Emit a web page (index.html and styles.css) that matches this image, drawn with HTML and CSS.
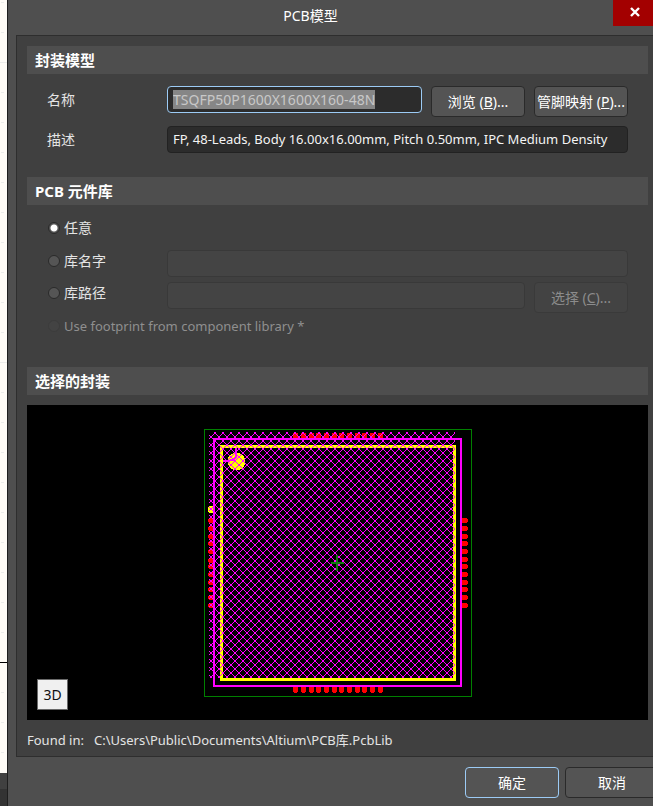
FILE: index.html
```
<!DOCTYPE html>
<html lang="zh-CN">
<head>
<meta charset="utf-8">
<meta name="viewport" content="width=device-width, initial-scale=1">
<title>PCB模型</title>
<link rel="stylesheet" href="styles.css">
</head>
<body>
<div class="sheet" aria-hidden="true"></div>
<main class="dialog">
  <header class="titlebar">
    <h1 class="title">PCB模型</h1>
    <button class="close" type="button" aria-label="关闭">
      <svg width="12" height="12" viewBox="0 0 12 12"><path d="M2 2L10 10M10 2L2 10" stroke="#fff" stroke-width="2.4" fill="none"/></svg>
    </button>
  </header>

  <div class="panel">
    <section>
      <h2 class="heading">封装模型</h2>
      <div class="fields">
        <div class="row">
          <label class="label" for="name">名称</label>
          <input class="input active" id="name" type="text" value="TSQFP50P1600X1600X160-48N" spellcheck="false">
          <button class="button" type="button">浏览 (<u>B</u>)...</button>
          <button class="button" type="button">管脚映射 (<u>P</u>)...</button>
        </div>
        <div class="row">
          <label class="label" for="desc">描述</label>
          <input class="input" id="desc" type="text" value="FP, 48-Leads, Body 16.00x16.00mm, Pitch 0.50mm, IPC Medium Density" spellcheck="false">
        </div>
      </div>
    </section>

    <section>
      <h2 class="heading">PCB 元件库</h2>
      <div class="options">
        <div class="option">
          <label class="choice"><input class="radio" type="radio" name="lib" checked>任意</label>
        </div>
        <div class="option">
          <label class="choice"><input class="radio" type="radio" name="lib">库名字</label>
          <input class="input" type="text" aria-label="库名字" disabled>
        </div>
        <div class="option">
          <label class="choice"><input class="radio" type="radio" name="lib">库路径</label>
          <input class="input" type="text" aria-label="库路径" disabled>
          <button class="button" type="button" disabled>选择 (<u>C</u>)...</button>
        </div>
        <div class="option">
          <label class="choice off"><input class="radio" type="radio" name="lib" disabled>Use footprint from component library *</label>
        </div>
      </div>
    </section>

    <section>
      <h2 class="heading">选择的封装</h2>
      <div class="preview">
        <svg class="board" width="268" height="268" viewBox="204 429 268 268" shape-rendering="crispEdges" role="img" aria-label="TSQFP footprint">
          <defs>
            <pattern id="hatch" x="215" y="433" width="8" height="8" patternUnits="userSpaceOnUse">
              <path fill="#f0f" d="M0 0h1v1h-1zM1 1h1v1h-1zM2 2h1v1h-1zM3 3h2v2h-2zM5 5h1v1h-1zM6 6h1v1h-1zM7 7h1v1h-1zM0 7h1v1h-1zM1 6h1v1h-1zM2 5h1v1h-1zM5 2h1v1h-1zM6 1h1v1h-1zM7 0h1v1h-1z"/>
            </pattern>
          </defs>
          <rect x="204.500" y="429.500" width="267" height="267" fill="none" stroke="#008000"/>
          <g stroke="#f00" stroke-width="5">
            <path d="M295.500 433v6M303.500 433v6M311.500 433v6M318.500 433v6M326.500 433v6M334.500 433v6M341.500 433v6M349.500 433v6M357.500 433v6M364.500 433v6M372.500 433v6M380.500 433v6"/>
            <path d="M295.500 687v5M303.500 687v5M311.500 687v5M318.500 687v5M326.500 687v5M334.500 687v5M341.500 687v5M349.500 687v5M357.500 687v5M364.500 687v5M372.500 687v5M380.500 687v5"/>
            <path d="M209 520.500h4M209 528.500h4M209 536.500h4M209 543.500h4M209 551.500h4M209 560.500h4M209 566.500h4M209 574.500h4M209 582.500h4M209 589.500h4M209 597.500h4M209 605.500h4"/>
            <path d="M462 520.500h5M462 528.500h5M462 536.500h5M462 543.500h5M462 551.500h5M462 559.500h5M462 566.500h5M462 574.500h5M462 582.500h5M462 589.500h5M462 597.500h5M462 605.500h5"/>
          </g>
          <g stroke="#f00" stroke-width="3">
            <path d="M295.500 692v1M303.500 692v1M311.500 692v1M318.500 692v1M326.500 692v1M334.500 692v1M341.500 692v1M349.500 692v1M357.500 692v1M364.500 692v1M372.500 692v1M380.500 692v1"/>
            <path d="M208 520.500h1M208 528.500h1M208 536.500h1M208 543.500h1M208 551.500h1M208 560.500h1M208 566.500h1M208 574.500h1M208 582.500h1M208 589.500h1M208 597.500h1M208 605.500h1"/>
            <path d="M467 520.500h1M467 528.500h1M467 536.500h1M467 543.500h1M467 551.500h1M467 559.500h1M467 566.500h1M467 574.500h1M467 582.500h1M467 589.500h1M467 597.500h1M467 605.500h1"/>
          </g>
          <rect x="221.500" y="446.500" width="233" height="233" fill="none" stroke="#ff0" stroke-width="3"/>
          <circle cx="236.500" cy="461.500" r="9" fill="#ff0"/>
          <path d="M210 506h4v7h-4l-2-1v-5z" fill="#ff0"/>
          <rect x="209" y="432" width="246" height="246" fill="url(#hatch)"/>
          <path d="M223 460.500h7q6 0 6-6v-7" fill="none" stroke="#f0f" stroke-width="2"/>
          <rect x="214" y="439" width="247" height="247" fill="none" stroke="#f0f" stroke-width="2"/>
          <path d="M331 562h13v2h-13zM336 555h2v16h-2z" fill="#147814"/>
        </svg>
        <button class="view" type="button">3D</button>
      </div>
      <p class="found"><span>Found in:</span><span>C:\Users\Public\Documents\Altium\PCB库.PcbLib</span></p>
    </section>
  </div>

  <footer class="footer">
    <button class="button primary" type="button">确定</button>
    <button class="button cut" type="button">取消</button>
  </footer>
</main>
<script src="script.js"></script>
</body>
</html>
```
FILE: styles.css
```
* { box-sizing: border-box; }

body {
  margin: 0;
  min-height: 100vh;
  display: flex;
  overflow: hidden;
  background: #4f4f4f;
  color: #e4e4e4;
  font: 14px/20px "Noto Sans", "Noto Sans CJK SC", sans-serif;
}

input, button { font: inherit; color: inherit; }

/* Strip of the schematic sheet that shows beside the dialog */
.sheet {
  flex: 0 0 7px;
  background:
    linear-gradient(#404040 0 16px, #333 16px) 0 100% / 100% 33px no-repeat,
    linear-gradient(#000, #000) 0 662px / 100% 1px no-repeat,
    linear-gradient(#ececea, #ececea) 0 62px / 100% 1px no-repeat,
    linear-gradient(#ececea, #ececea) 0 362px / 100% 1px no-repeat,
    linear-gradient(#fffcf7, #fffcf7) 0 0 / 1px 100% no-repeat,
    linear-gradient(#fffcf7, #fffcf7) 100% 0 / 3px 100% no-repeat,
    repeating-linear-gradient(#fffcf7 0 2px, #ececea 2px 3px, #fffcf7 3px 30px);
}

.dialog {
  flex: 1;
  min-width: 0;
  border-left: 1px solid #1e1e1e;
  background: #4f4f4f;
  overflow: hidden;
}

.titlebar { display: flex; height: 35px; }

.title {
  flex: 1;
  margin: 0;
  text-align: center;
  font-size: 14px;
  font-weight: 400;
  line-height: 32px;
  color: #fff;
}

.close {
  display: grid;
  place-items: center;
  width: 40px;
  height: 26px;
  padding: 0 0 2px 4px;
  border: 0;
  background: #a30000;
}

.panel {
  margin-left: 8px;
  padding: 10px 5px 0 10px;
  border: 1px solid #2e2e2e;
  border-right: 0;
  background: #404040;
}

.heading {
  height: 28px;
  margin: 0;
  padding: 0 8px;
  background: #4e4e4e;
  color: #fff;
  font-size: 15px;
  font-weight: 700;
  line-height: 28px;
}

.fields { padding: 12px 20px 24px; }

.row, .option { display: flex; align-items: flex-start; gap: 9px; }
.row + .row { margin-top: 9px; }

.label { flex: 0 0 111px; line-height: 27px; }

.input {
  flex: 1;
  min-width: 0;
  height: 27px;
  padding: 0 5px 1px;
  border: 1px solid #222;
  border-radius: 4px;
  outline: 0;
  background: #2c2c2c;
  color: #f4f4f4;
  font-size: 13px;
}

.input.active { border-color: #9ccbf5; color: #c8c8c8; font-size: 14px; }
.input::selection { background: #868686; color: #c8c8c8; }
.input:disabled { border-color: #393939; background: #444; }

.button {
  flex: 0 0 94px;
  height: 31px;
  padding: 0;
  border: 1px solid #2a2a2a;
  border-radius: 4px;
  background: #545454;
  color: #fff;
  white-space: nowrap;
}

.button:disabled { border-color: #3a3a3a; background: #434343; color: #8c8c8c; }

.options { padding: 7px 20px 21px; }
.option { height: 32px; }

.choice {
  flex: 0 0 111px;
  display: flex;
  align-items: center;
  gap: 4px;
  height: 22px;
  padding-left: 1px;
  white-space: nowrap;
}

.choice.off { height: 24px; color: #8f8f8f; font-size: 13px; }
.option:first-child { padding-top: 5px; height: 38px; }

.radio {
  appearance: none;
  width: 12px;
  height: 12px;
  margin: 0;
  border: 1px solid #2a2a2a;
  border-radius: 50%;
  background: #555;
}

.radio:checked { background: radial-gradient(circle, #fff 0 3px, #555 4px); }
.radio:disabled { border-color: #3c3c3c; background: #434343; }

.preview {
  position: relative;
  display: flex;
  align-items: center;
  justify-content: center;
  height: 315px;
  margin-top: 10px;
  padding: 1px 0 0 1px;
  background: #000;
}

.board { display: block; }

.view {
  position: absolute;
  left: 10px;
  bottom: 10px;
  width: 31px;
  height: 31px;
  padding: 0;
  border: 1px solid #6a6a6a;
  background: #f0f0f0;
  color: #111;
}

.found {
  display: flex;
  gap: 10px;
  margin: 0;
  padding: 10px 0 6px;
  font-size: 13px;
}

.footer {
  display: flex;
  justify-content: flex-end;
  gap: 6px;
  padding: 10px 0 8px;
}

.primary { border-color: #9ccbf5; }
.cut { margin-right: -6px; }
```
FILE: script.js
```
document.getElementById("name").select();
```
